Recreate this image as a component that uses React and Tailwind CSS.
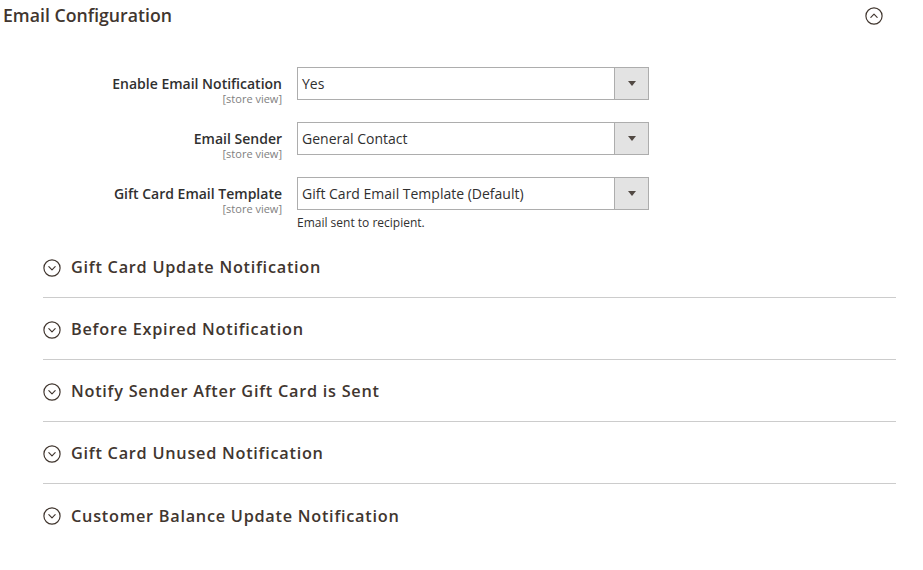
import React from 'react';

const fields = [
  { label: 'Enable Email Notification', value: 'Yes' },
  { label: 'Email Sender', value: 'General Contact' },
  { label: 'Gift Card Email Template', value: 'Gift Card Email Template (Default)', note: 'Email sent to recipient.' },
];

const groups = [
  'Gift Card Update Notification',
  'Before Expired Notification',
  'Notify Sender After Gift Card is Sent',
  'Gift Card Unused Notification',
  'Customer Balance Update Notification',
];

const CircleChevron = ({ up, className }) => (
  <svg className={className} viewBox="0 0 20 20" fill="none" stroke="currentColor" strokeWidth="1.3">
    <circle cx="10" cy="10" r="9" />
    {up ? (
      <path d="M6.5 11.5 L10 8 L13.5 11.5" strokeLinecap="round" strokeLinejoin="round" />
    ) : (
      <path d="M6.5 8.5 L10 12 L13.5 8.5" strokeLinecap="round" strokeLinejoin="round" />
    )}
  </svg>
);

const Field = ({ label, value, note }) => (
  <div className="flex items-start h-[55px]">
    <div className="w-[282px] shrink-0 text-right pt-[8px]">
      <div className="text-[14px] leading-[17px] font-semibold text-[#303030]">{label}</div>
      <div className="text-[11px] leading-[13px] text-[#808080]">[store view]</div>
    </div>
    <div className="ml-[15px]">
      <div className="flex w-[352px] h-[33px] border border-[#adadad] bg-white">
        <div className="flex-1 flex items-center pl-[4px] text-[14px] text-[#303030]">{value}</div>
        <div className="w-[34px] flex items-center justify-center bg-[#e3e3e3] border-l border-[#adadad]">
          <div className="w-0 h-0 border-l-[4px] border-r-[4px] border-t-[5px] border-l-transparent border-r-transparent border-t-[#514943]" />
        </div>
      </div>
      {note && <div className="mt-[6px] text-[12px] leading-[14px] text-[#303030]">{note}</div>}
    </div>
  </div>
);

export default function App() {
  return (
    <div className="w-[923px] h-[570px] bg-white overflow-hidden" style={{ fontFamily: '"Open Sans", sans-serif' }}>
      <div className="flex items-center justify-between h-[31px] pl-[3px] pr-[40px]">
        <h2 className="text-[17.7px] font-semibold text-[#41362f]">Email Configuration</h2>
        <CircleChevron up className="w-[18px] h-[18px] text-[#41362f]" />
      </div>
      <div className="pt-[36px]">
        {fields.map((f) => (
          <Field key={f.label} {...f} />
        ))}
      </div>
      <div className="ml-[43px] mr-[27px] mt-[4px]">
        {groups.map((g, i) => (
          <div
            key={g}
            className={`flex items-center gap-[10px] h-[62px] pt-[2px] ${i < groups.length - 1 ? 'border-b border-[#cccccc]' : ''}`}
          >
            <CircleChevron className="w-[18px] h-[18px] text-[#41362f]" />
            <span className="text-[16.3px] font-semibold tracking-[0.045em] text-[#41362f]">{g}</span>
          </div>
        ))}
      </div>
    </div>
  );
}
